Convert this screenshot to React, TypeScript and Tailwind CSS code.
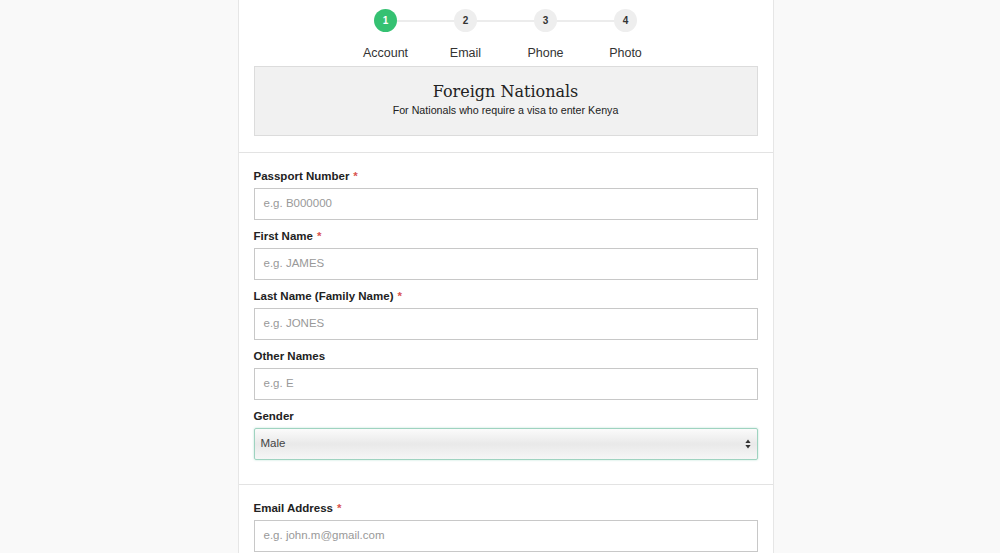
import React from "react";

const Label = ({ text, req }: { text: string; req?: boolean }) => (
  <div className="h-[23px] pt-[2px] flex items-center text-[11.5px] font-bold text-[#222] leading-none">
    {text}
    {req && <span className="text-[#d9534f] ml-[4px]">*</span>}
  </div>
);

const Input = ({ ph }: { ph: string }) => (
  <div className="h-[32px] border border-[#c8c8c8] bg-white flex items-center px-[9px] text-[11.5px] text-[#999] mb-[5px]">
    {ph}
  </div>
);

export default function App() {
  const steps = ["Account", "Email", "Phone", "Photo"];
  return (
    <div className="w-[1000px] h-[553px] bg-[#f9f9f9] overflow-hidden flex justify-center" style={{ fontFamily: '"Liberation Sans", Arial, sans-serif' }}>
      <div className="w-[536px] ml-[11px] bg-white border-x border-[#e6e6e6] flex flex-col">
        {/* stepper */}
        <div className="flex flex-col px-[15px] pb-[16px]">
          <div className="relative flex justify-center pt-[9px]">
            <div className="absolute top-[20px] left-[132px] w-[240px] h-[2px] bg-[#ececec]" />
            {steps.map((s, i) => (
              <div key={s} className="relative w-[80px] flex flex-col items-center">
                <div
                  className={
                    i === 0
                      ? "w-[23px] h-[23px] rounded-full bg-[#35c172] text-white text-[10px] font-bold flex items-center justify-center"
                      : "w-[23px] h-[23px] rounded-full bg-[#eeeeee] text-[#333] text-[10px] font-bold flex items-center justify-center"
                  }
                >
                  {i + 1}
                </div>
                <div className="mt-[15px] text-[12.5px] text-[#333] leading-none">{s}</div>
              </div>
            ))}
          </div>
          <div className="mt-[6px] h-[70px] bg-[#f1f1f1] border border-[#dcdcdc] flex flex-col items-center justify-center">
            <div className="text-[#222] leading-none mt-[-2px]" style={{ fontFamily: '"DejaVu Serif", "Liberation Serif", serif', fontSize: 16 }}>
              Foreign Nationals
            </div>
            <div className="text-[10.7px] text-[#222] leading-none mt-[5px]">For Nationals who require a visa to enter Kenya</div>
          </div>
        </div>
        <div className="border-t border-[#e3e3e3] px-[15px] pt-[12px]">
          <Label text="Passport Number" req />
          <Input ph="e.g. B000000" />
          <Label text="First Name" req />
          <Input ph="e.g. JAMES" />
          <Label text="Last Name (Family Name)" req />
          <Input ph="e.g. JONES" />
          <Label text="Other Names" />
          <Input ph="e.g. E" />
          <Label text="Gender" />
          <div className="h-[32px] border border-[#9fd3c0] rounded-[2px] bg-gradient-to-b from-[#fbfbfb] via-[#e9e9e9] to-[#f6f6f6] shadow-[0_0_2px_rgba(100,190,160,0.5)] flex items-center justify-between px-[6px] text-[11.5px] text-[#444]">
            <span>Male</span>
            <svg width="6" height="10" viewBox="0 0 6 10">
              <path d="M3 0.5 L5.6 4 H0.4 Z" fill="#333" />
              <path d="M3 9.5 L5.6 6 H0.4 Z" fill="#333" />
            </svg>
          </div>
          <div className="h-[24px]" />
        </div>
        <div className="border-t border-[#e3e3e3] px-[15px] pt-[12px]">
          <Label text="Email Address" req />
          <Input ph="e.g. john.m@gmail.com" />
        </div>
      </div>
    </div>
  );
}
